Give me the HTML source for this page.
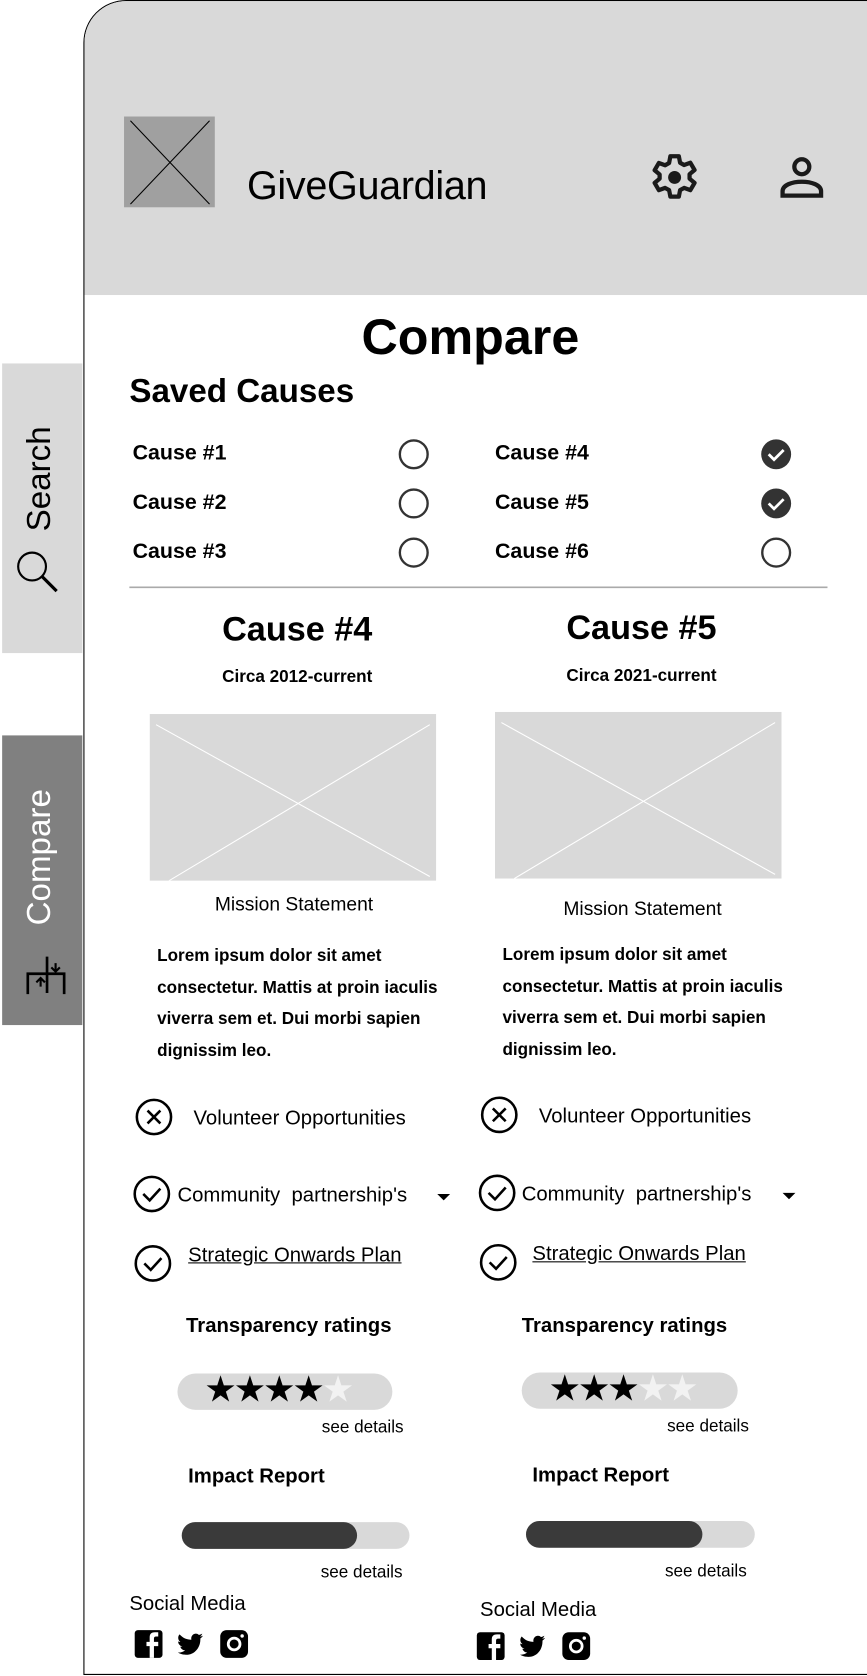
<!DOCTYPE html>
<html><head><meta charset="utf-8"><style>
html,body{margin:0;padding:0;width:867px;height:1676px;overflow:hidden;background:#fff;font-family:"Liberation Sans",sans-serif;color:#000}
#w{position:absolute;left:0;top:0;width:811px;height:1568px;transform:scale(1.0691,1.0689);transform-origin:0 0}
.a{position:absolute;white-space:nowrap}
.b{font-weight:bold}
.c{transform:translateX(-50%)}
</style></head><body><div id="w">
<div class="a" style="left:78px;top:0;width:732px;height:1565px;border:1.5px solid #000;border-top-left-radius:40px;overflow:hidden">
 <div style="position:absolute;left:0;top:0;width:100%;height:275px;background:#d9d9d9"></div>
</div>
<svg class="a" style="left:116px;top:109px" width="85" height="85"><rect width="85" height="85" fill="#a0a0a0"/><path d="M6 4L80 82M80 4L6 82" stroke="#000" stroke-width="1"/></svg>
<div class="a" style="left:231px;top:153px;font-size:37px;letter-spacing:-0.3px">GiveGuardian</div>
<svg class="a" style="left:603px;top:138px" width="56" height="56" viewBox="0 0 24 24"><path fill="none" stroke="#1a1a1a" stroke-width="1.7" stroke-linejoin="round" d="M10.3 2h3.4l.5 2.6 1.6.9 2.5-.9 1.7 2.9-2 1.7v1.8l2 1.7-1.7 2.9-2.5-.9-1.6.9-.5 2.6h-3.4l-.5-2.6-1.6-.9-2.5.9-1.7-2.9 2-1.7V9.3l-2-1.7 1.7-2.9 2.5.9 1.6-.9z" transform="translate(0 1.5)"/><circle cx="12" cy="12" r="2.6" fill="#1a1a1a"/></svg>
<svg class="a" style="left:729px;top:144px" width="42" height="42" viewBox="0 0 42 42"><circle cx="21" cy="12" r="7" fill="none" stroke="#1a1a1a" stroke-width="4"/><path d="M3 39v-4c0-6 9-9 18-9s18 3 18 9v4z" fill="none" stroke="#1a1a1a" stroke-width="4"/></svg>
<div class="a" style="left:2px;top:340px;width:75px;height:271px;background:#d9d9d9"></div>
<div class="a" style="left:37px;top:448px;transform:translate(-50%,-50%) rotate(-90deg);font-size:31px">Search</div>
<svg class="a" style="left:12px;top:512px" width="44" height="44"><circle cx="18" cy="18" r="13" fill="none" stroke="#000" stroke-width="2"/><path d="M27 27L41 41" stroke="#000" stroke-width="3"/></svg>
<div class="a" style="left:2px;top:688px;width:75px;height:271px;background:#808080"></div>
<div class="a" style="left:37px;top:802px;transform:translate(-50%,-50%) rotate(-90deg);font-size:31px;color:#fff">Compare</div>
<svg class="a" style="left:24px;top:893px" width="38" height="38" fill="none" stroke="#000" stroke-width="2.5"><path d="M2 37V18H12M36 37V18H26M20 2V36M2 18h34"/><path d="M14 30V22M10 26l4-4 4 4M28 8v8M24 12l4 4 4-4" stroke-width="2"/></svg>
<div class="a b c" style="left:440px;top:287px;font-size:47px">Compare</div>
<div class="a b" style="left:121px;top:348px;font-size:31px">Saved Causes</div>
<div class="a b" style="left:124px;top:413px;font-size:20px">Cause #1</div>
<div class="a b" style="left:124px;top:459px;font-size:20px">Cause #2</div>
<div class="a b" style="left:124px;top:505px;font-size:20px">Cause #3</div>
<div class="a b" style="left:463px;top:413px;font-size:20px">Cause #4</div>
<div class="a b" style="left:463px;top:459px;font-size:20px">Cause #5</div>
<div class="a b" style="left:463px;top:505px;font-size:20px">Cause #6</div>
<svg class="a" style="left:0;top:0" width="811" height="560">
 <g fill="none" stroke="#333" stroke-width="2.2"><circle cx="387" cy="425" r="13"/><circle cx="387" cy="471" r="13"/><circle cx="387" cy="517" r="13"/><circle cx="726" cy="517" r="13"/></g>
 <circle cx="726" cy="425" r="14" fill="#333"/><circle cx="726" cy="471" r="14" fill="#333"/>
 <path d="M719 425l5 5 9-9M719 471l5 5 9-9" fill="none" stroke="#fff" stroke-width="2.6"/>
 <path d="M121 549.5H774" stroke="#aaa" stroke-width="1.5"/>
</svg>
<div class="a b c" style="left:278px;top:570px;font-size:32px">Cause #4</div>
<div class="a b c" style="left:600px;top:569px;font-size:32px">Cause #5</div>
<div class="a b c" style="left:278px;top:625px;font-size:16px">Circa 2012-current</div>
<div class="a b c" style="left:600px;top:624px;font-size:16px">Circa 2021-current</div>
<svg class="a" style="left:140px;top:668px" width="268" height="156"><rect width="268" height="156" fill="#d9d9d9"/><path d="M6 10L262 152M262 10L18 156" stroke="#fff" stroke-width="1"/></svg>
<svg class="a" style="left:463px;top:666px" width="268" height="156"><rect width="268" height="156" fill="#d9d9d9"/><path d="M6 10L262 152M262 10L18 156" stroke="#fff" stroke-width="1"/></svg>
<div class="a c" style="left:275px;top:836px;font-size:18px">Mission Statement</div>
<div class="a c" style="left:601px;top:840px;font-size:18px">Mission Statement</div>
<div class="a b" style="left:147px;top:880px;font-size:16px;line-height:29.6px">Lorem ipsum dolor sit amet<br>consectetur. Mattis at proin iaculis<br>viverra sem et. Dui morbi sapien<br>dignissim leo.</div>
<div class="a b" style="left:470px;top:879px;font-size:16px;line-height:29.6px">Lorem ipsum dolor sit amet<br>consectetur. Mattis at proin iaculis<br>viverra sem et. Dui morbi sapien<br>dignissim leo.</div>
<div class="a" style="left:181px;top:1036px;font-size:19px">Volunteer Opportunities</div>
<div class="a" style="left:504px;top:1034px;font-size:19px">Volunteer Opportunities</div>
<div class="a" style="left:166px;top:1108px;font-size:19px">Community&nbsp; partnership's</div>
<div class="a" style="left:488px;top:1107px;font-size:19px">Community&nbsp; partnership's</div>
<div class="a" style="left:176px;top:1164px;font-size:19px;text-decoration:underline">Strategic Onwards Plan</div>
<div class="a" style="left:498px;top:1163px;font-size:19px;text-decoration:underline">Strategic Onwards Plan</div>
<svg class="a" style="left:0;top:1020px" width="811" height="180" fill="none" stroke="#000" stroke-width="2.4">
 <circle cx="144" cy="25" r="16"/><path d="M138 19l12 12M150 19l-12 12"/>
 <circle cx="467" cy="23" r="16"/><path d="M461 17l12 12M473 17l-12 12"/>
 <circle cx="142" cy="97" r="16"/><path d="M134 97l6 6 10-11"/>
 <circle cx="465" cy="96" r="16"/><path d="M457 96l6 6 10-11"/>
 <circle cx="143" cy="162" r="16"/><path d="M135 162l6 6 10-11"/>
 <circle cx="466" cy="161" r="16"/><path d="M458 161l6 6 10-11"/>
 <path d="M409 97h12l-6 6z M732 96h12l-6 6z" fill="#000" stroke="none"/>
</svg>
<div class="a b" style="left:174px;top:1230px;font-size:19px">Transparency ratings</div>
<div class="a b" style="left:488px;top:1230px;font-size:19px">Transparency ratings</div>
<div class="a" style="left:166px;top:1285px;width:201px;height:34px;border-radius:17px;background:#d9d9d9"></div>
<div class="a" style="left:488px;top:1284px;width:202px;height:34px;border-radius:17px;background:#d9d9d9"></div>
<div class="a" style="left:191px;top:1280px;font-size:34px;letter-spacing:-3px;font-family:'DejaVu Sans',sans-serif">★★★★<span style="color:#f2f2f2">★</span></div>
<div class="a" style="left:513px;top:1279px;font-size:34px;letter-spacing:-3px;font-family:'DejaVu Sans',sans-serif">★★★<span style="color:#f2f2f2">★★</span></div>
<div class="a" style="left:301px;top:1327px;font-size:16px">see details</div>
<div class="a" style="left:624px;top:1326px;font-size:16px">see details</div>
<div class="a b" style="left:176px;top:1371px;font-size:19px">Impact Report</div>
<div class="a b" style="left:498px;top:1370px;font-size:19px">Impact Report</div>
<div class="a" style="left:170px;top:1424px;width:213px;height:25px;border-radius:13px;background:#d9d9d9"><div style="width:164px;height:25px;border-radius:13px;background:#3a3a3a"></div></div>
<div class="a" style="left:492px;top:1423px;width:214px;height:25px;border-radius:13px;background:#d9d9d9"><div style="width:165px;height:25px;border-radius:13px;background:#3a3a3a"></div></div>
<div class="a" style="left:300px;top:1463px;font-size:16px">see details</div>
<div class="a" style="left:622px;top:1462px;font-size:16px">see details</div>
<div class="a" style="left:121px;top:1490px;font-size:19px">Social Media</div>
<div class="a" style="left:449px;top:1496px;font-size:19px">Social Media</div>
<svg class="a" style="left:0;top:1520px" width="811" height="48">
 <defs><g id="s">
  <rect x="0" y="5" width="26" height="26" rx="3" fill="#000"/><path d="M18 31V20h4v-4h-4v-3c0-1.3.6-2 2-2h2V7h-3c-4 0-5 2-5 5v4h-3v4h3v11z" fill="#fff"/>
  <path d="M42 9c3 3.5 7 5 11 5-1-4.5 4-7.5 7-4.5 1.2-.2 2.3-.7 3.2-1.2-.4 1.2-1.2 2.2-2.2 2.8 1-.1 2-.4 2.9-.8-.7 1-1.5 1.9-2.5 2.6C61.8 22 55 29 47 28c-2.5 0-4.7-.8-6.6-2 2.5.2 5-.6 6.8-2-2.2 0-4-1.5-4.6-3.5.7.1 1.4.1 2-.1-2.3-.5-4-2.5-4-4.8.6.3 1.4.6 2.1.6-2-1.5-2.6-4.2-1.4-6.3z" fill="#000"/>
  <rect x="80" y="5" width="26" height="26" rx="6" fill="#000"/><circle cx="93" cy="18" r="5.5" fill="none" stroke="#fff" stroke-width="2.6"/><circle cx="100.5" cy="10.5" r="1.6" fill="#fff"/>
 </g></defs>
 <use href="#s" x="126" y="0"/><use href="#s" x="446" y="2"/>
</svg>
</div></body></html>
